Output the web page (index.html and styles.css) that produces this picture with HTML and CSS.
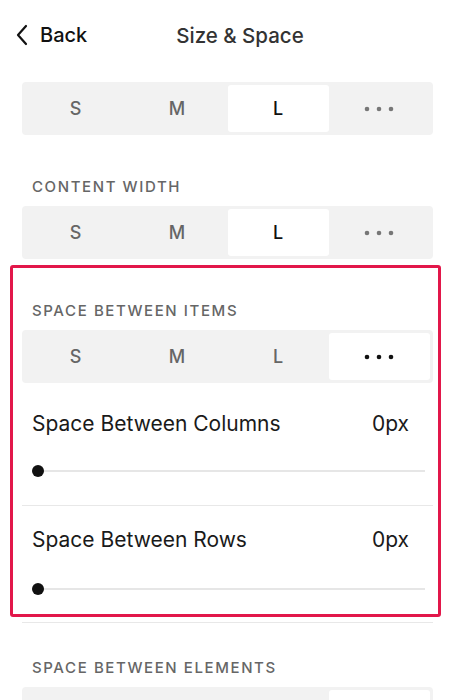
FILE: index.html
```html
<!DOCTYPE html>
<html lang="en">
<head>
<meta charset="UTF-8">
<meta name="viewport" content="width=device-width, initial-scale=1.0">
<title>Size &amp; Space</title>
<link rel="stylesheet" href="styles.css">
</head>
<body>
<div class="panel">
  <div class="header">
    <button class="back-btn">
      <svg width="14" height="22" viewBox="0 0 14 22"><path d="M11 2 L3 11 L11 20" fill="none" stroke="#111" stroke-width="2.2" stroke-linecap="round" stroke-linejoin="round"/></svg>
      <span>Back</span>
    </button>
    <h1 class="title">Size &amp; Space</h1>
  </div>

  <div class="segmented first">
    <div class="seg">S</div>
    <div class="seg">M</div>
    <div class="seg active">L</div>
    <div class="seg dots"><svg width="30" height="6" viewBox="0 0 30 6"><circle cx="3" cy="3" r="2.3"/><circle cx="15" cy="3" r="2.3"/><circle cx="27" cy="3" r="2.3"/></svg></div>
  </div>

  <div class="section-label">Content Width</div>
  <div class="segmented">
    <div class="seg">S</div>
    <div class="seg">M</div>
    <div class="seg active">L</div>
    <div class="seg dots"><svg width="30" height="6" viewBox="0 0 30 6"><circle cx="3" cy="3" r="2.3"/><circle cx="15" cy="3" r="2.3"/><circle cx="27" cy="3" r="2.3"/></svg></div>
  </div>

  <div class="highlight">
    <div class="section-label">Space Between Items</div>
    <div class="segmented">
      <div class="seg">S</div>
      <div class="seg">M</div>
      <div class="seg">L</div>
      <div class="seg dots active"><svg width="30" height="6" viewBox="0 0 30 6"><circle cx="3" cy="3" r="2.3"/><circle cx="15" cy="3" r="2.3"/><circle cx="27" cy="3" r="2.3"/></svg></div>
    </div>

    <div class="slider-row">
      <div class="slider-head">
        <span>Space Between Columns</span>
        <span>0px</span>
      </div>
      <div class="slider"><div class="knob"></div></div>
    </div>
    <div class="slider-row last">
      <div class="slider-head">
        <span>Space Between Rows</span>
        <span>0px</span>
      </div>
      <div class="slider"><div class="knob"></div></div>
    </div>
  </div>

  <div class="divider"></div>

  <div class="section-label">Space Between Elements</div>
  <div class="segmented">
    <div class="seg">S</div>
    <div class="seg">M</div>
    <div class="seg">L</div>
    <div class="seg dots active"><svg width="30" height="6" viewBox="0 0 30 6"><circle cx="3" cy="3" r="2.3"/><circle cx="15" cy="3" r="2.3"/><circle cx="27" cy="3" r="2.3"/></svg></div>
  </div>
</div>
</body>
</html>
```

FILE: styles.css
```css
body {
  margin: 0;
  background-color: #fff;
  font-family: Inter, "Liberation Sans", Arial, sans-serif;
  color: #1a1a1a;
}

.panel {
  width: 454px;
  height: 700px;
  overflow: hidden;
  padding: 0 21px 0 22px;
  box-sizing: border-box;
}

.header {
  display: flex;
  align-items: center;
  height: 70px;
  margin: 0 -7px;
}

.back-btn {
  display: flex;
  align-items: center;
  gap: 11px;
  background: none;
  border: none;
  padding: 0;
  font-family: inherit;
  font-size: 20px;
  font-weight: 500;
  color: #111;
  cursor: pointer;
}

.title {
  margin: 0 0 0 89px;
  font-size: 20.5px;
  font-weight: 500;
  color: #333;
}

.segmented {
  display: grid;
  grid-template-columns: repeat(4, 1fr);
  padding: 3px;
  height: 53px;
  box-sizing: border-box;
  background-color: #f2f2f2;
  border-radius: 4px;
}

.segmented.first {
  margin-top: 12px;
}

.seg {
  display: flex;
  align-items: center;
  justify-content: center;
  font-size: 18px;
  font-weight: 500;
  color: #666;
  border-radius: 3px;
}

.seg.active {
  background-color: #fff;
  color: #111;
}

.seg.dots svg {
  fill: #777;
}

.seg.dots.active svg {
  fill: #111;
}

.section-label {
  margin: 43px 0 10px 10px;
  font-size: 15px;
  line-height: 18px;
  font-weight: 500;
  letter-spacing: 1.6px;
  text-transform: uppercase;
  color: #666;
}

.highlight {
  margin: 6px -8px 0 -12px;
  padding: 34px 5px 19px 9px;
  border: 3px solid #e2174a;
  border-radius: 3px;
}

.highlight .section-label {
  margin-top: 0;
}

.slider-row {
  padding-top: 29px;
  border-bottom: 1px solid #e8e8e8;
  padding-bottom: 28px;
}

.slider-row.last {
  border-bottom: none;
  padding-top: 22px;
  padding-bottom: 0;
}

.slider-head {
  display: flex;
  justify-content: space-between;
  padding: 0 24px 0 10px;
  font-size: 21px;
  line-height: 24px;
  color: #1a1a1a;
}

.slider {
  position: relative;
  margin: 29px 8px 0 10px;
  height: 12px;
  display: flex;
  align-items: center;
}

.slider::before {
  content: "";
  flex: 1;
  height: 2px;
  background-color: #e6e6e6;
}

.knob {
  position: absolute;
  left: 0;
  top: 0;
  width: 12px;
  height: 12px;
  border-radius: 50%;
  background-color: #111;
}

.slider-row.last .slider {
  margin-top: 31px;
}

.divider {
  height: 1px;
  background-color: #e8e8e8;
  margin-top: 5px;
}

.divider + .section-label {
  margin-top: 36px;
}
```
